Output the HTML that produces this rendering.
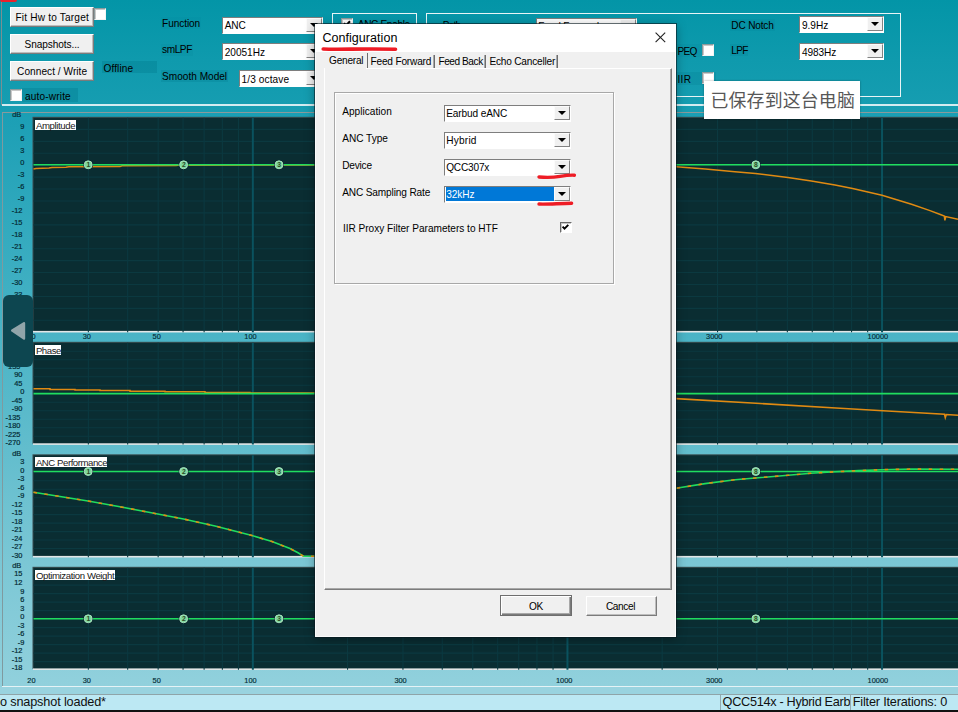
<!DOCTYPE html>
<html><head><meta charset="utf-8"><title>ANC Tuning - Configuration</title>
<style>
html,body{margin:0;padding:0;}
body{width:958px;height:712px;overflow:hidden;position:relative;background:#000;font-family:"Liberation Sans","Noto Sans CJK SC",sans-serif;}
.abs,.t,.btn,.cb,.chk,.lb{position:absolute;}
.t{white-space:nowrap;line-height:1;}
#bg{left:0;top:0;width:958px;height:695px;background:linear-gradient(to bottom,#0395a7 0px,#0f9aad 60px,#169db1 105px,#1c9fb5 118px,#33aabe 230px,#4ab4c6 337px,#62bdcd 450px,#7bc7d5 562px,#90d0dc 680px,#93d1dd 695px);}
.btn{background:#f0f0f0;box-sizing:border-box;border:1px solid;border-color:#fff #7b7b7b #7b7b7b #fff;box-shadow:inset -1px -1px 0 #bdbdbd;}
.cb{background:#fff;box-sizing:border-box;border:1px solid;border-color:#7e7e7e #fff #fff #7e7e7e;}
.cbb{position:absolute;right:0;top:0;bottom:1px;width:16px;background:#f0f0f0;box-sizing:border-box;border:1px solid;border-color:#fbfbfb #838383 #838383 #fbfbfb;}
.cbb:after{content:"";position:absolute;left:50%;top:50%;margin-left:-4px;margin-top:-2px;border:4px solid transparent;border-top-color:#000;border-bottom-width:0;}
.chk{background:#fff;box-sizing:border-box;border:1px solid;border-color:#8c9a9c #f4f4f4 #f4f4f4 #8c9a9c;box-shadow:inset 1px 1px 0 #c9c9c9;}
.lb{background:rgba(0,120,140,0.35);}
.grp{position:absolute;box-sizing:border-box;border:1px solid #e8f4f6;box-shadow:inset 0 0 0 0 #fff;}
.ttl{position:absolute;background:#fff;}
</style></head><body>
<div id="bg" class="abs"></div>

<div class="abs" style="left:1px;top:0;width:1px;height:105px;background:#7a8f93"></div>
<div class="abs" style="left:2px;top:104px;width:956px;height:2px;background:#d3ecf1"></div>
<div class="abs" style="left:0;top:0;width:17px;height:2px;background:#e8222c;border-radius:0 0 4px 4px"></div>
<div class="btn" style="left:10px;top:7px;width:84px;height:20px"></div>
<span class="t" id="t0" style="top:12.87px;font-size:10.1px;color:#000;letter-spacing:0.194px;left:15.40px;">Fit Hw to Target</span>
<div class="btn" style="left:10px;top:34px;width:84px;height:20px"></div>
<span class="t" id="t1" style="top:40.17px;font-size:10.1px;color:#000;letter-spacing:-0.094px;left:24.60px;">Snapshots...</span>
<div class="btn" style="left:10px;top:61px;width:84px;height:20px"></div>
<span class="t" id="t2" style="top:67.27px;font-size:10.1px;color:#000;letter-spacing:0.042px;left:17.10px;">Connect / Write</span>
<div class="chk" style="left:94px;top:8px;width:12px;height:12px"></div>
<div class="lb" style="left:102px;top:61px;width:55px;height:12px"></div>
<span class="t" id="t3" style="top:64.27px;font-size:10.1px;color:#000;letter-spacing:0.143px;left:103.40px;">Offline</span>
<div class="lb" style="left:22px;top:88px;width:56px;height:14px"></div>
<div class="chk" style="left:10px;top:89px;width:12px;height:12px"></div>
<span class="t" id="t4" style="top:91.57px;font-size:10.1px;color:#000;letter-spacing:0.167px;left:24.90px;">auto-write</span>
<div class="lb" style="left:161px;top:17px;width:40px;height:12px;opacity:.2"></div>
<span class="t" id="t5" style="top:18.67px;font-size:10.1px;color:#000;letter-spacing:-0.090px;left:162.10px;">Function</span>
<div class="lb" style="left:161px;top:44px;width:32px;height:12px;opacity:.3"></div>
<span class="t" id="t6" style="top:45.07px;font-size:10.1px;color:#000;letter-spacing:-0.434px;left:162.10px;">smLPF</span>
<div class="lb" style="left:161px;top:70px;width:67px;height:12px;opacity:.7"></div>
<span class="t" id="t7" style="top:72.07px;font-size:10.1px;color:#000;letter-spacing:-0.008px;left:162.10px;">Smooth Model</span>
<div class="cb" style="left:222px;top:17px;width:101px;height:17px"><div class="cbb"></div></div>
<span class="t" id="t8" style="top:21.17px;font-size:10.1px;color:#000;letter-spacing:-0.104px;left:224.70px;">ANC</span>
<div class="cb" style="left:222px;top:43px;width:101px;height:17px"><div class="cbb"></div></div>
<span class="t" id="t9" style="top:47.67px;font-size:10.1px;color:#000;letter-spacing:-0.015px;left:224.70px;">20051Hz</span>
<div class="cb" style="left:239px;top:70px;width:84px;height:17px"><div class="cbb"></div></div>
<span class="t" id="t10" style="top:74.77px;font-size:10.1px;color:#000;letter-spacing:0.092px;left:241.60px;">1/3 octave</span>
<div class="grp" style="left:332px;top:13px;width:85px;height:40px"></div>
<div class="chk" style="left:341px;top:18px;width:12px;height:12px"></div>
<svg class="abs" style="left:341px;top:18px" width="12" height="12" viewBox="0 0 12 12"><path d="M3 5.2 L5 7.4 L9 3.2" stroke="#000" stroke-width="2" fill="none"/></svg>
<span class="t" id="t11" style="top:20.17px;font-size:10.1px;color:#000;letter-spacing:-0.355px;left:357.80px;">ANC Enable</span>
<div class="grp" style="left:426px;top:13px;width:475px;height:84px"></div>
<span class="t" id="t12" style="top:20.97px;font-size:10.1px;color:#000;letter-spacing:-0.766px;left:442.70px;">Path</span>
<div class="cb" style="left:536px;top:18px;width:101px;height:17px"><div class="cbb"></div></div>
<span class="t" id="t13" style="top:22.17px;font-size:10.1px;color:#000;letter-spacing:-0.187px;left:538.30px;">Feed Forward</span>
<div class="lb" style="left:730px;top:19px;width:45px;height:12px;opacity:.4"></div>
<span class="t" id="t14" style="top:20.97px;font-size:10.1px;color:#000;letter-spacing:-0.183px;left:731.30px;">DC Notch</span>
<div class="cb" style="left:799px;top:16px;width:85px;height:17px"><div class="cbb"></div></div>
<span class="t" id="t15" style="top:20.97px;font-size:10.1px;color:#000;letter-spacing:-0.015px;left:801.90px;">9.9Hz</span>
<div class="lb" style="left:730px;top:44px;width:18px;height:12px;opacity:.5"></div>
<span class="t" id="t16" style="top:45.57px;font-size:10.1px;color:#000;letter-spacing:-0.672px;left:731.30px;">LPF</span>
<div class="cb" style="left:799px;top:43px;width:85px;height:17px"><div class="cbb"></div></div>
<span class="t" id="t17" style="top:47.77px;font-size:10.1px;color:#000;letter-spacing:-0.083px;left:801.90px;">4983Hz</span>
<div class="lb" style="left:676px;top:44px;width:26px;height:13px;opacity:.35"></div>
<span class="t" id="t18" style="top:46.57px;font-size:10.1px;color:#000;letter-spacing:-0.676px;left:677.40px;">PEQ</span>
<div class="chk" style="left:702px;top:44px;width:12px;height:12px"></div>
<div class="lb" style="left:676px;top:72px;width:40px;height:13px;opacity:.6"></div>
<span class="t" id="t19" style="top:75.37px;font-size:10.1px;color:#000;letter-spacing:0.365px;left:677.40px;">IIR</span>
<div class="chk" style="left:702px;top:72px;width:12px;height:12px"></div>
<div class="abs" style="left:2px;top:112px;width:956px;height:1px;background:#8a9a9c"></div>
<div class="abs" style="left:2px;top:112px;width:1px;height:575px;background:#7f9a9f"></div>
<div class="abs" style="left:2px;top:686px;width:956px;height:1px;background:#e4f3f6"></div>
<svg class="abs" style="left:0;top:0" width="958" height="712" viewBox="0 0 958 712">
<rect x="32.5" y="116.8" width="926" height="214.59999999999997" fill="#3a4f52"/>
<rect x="33.5" y="117.8" width="925" height="213.59999999999997" fill="#0a2d32"/>
<rect x="33" y="330.9" width="925" height="1.6" fill="#e2e6e7"/>
<path d="M33.5 129.41H958M33.5 141.34H958M33.5 153.27H958M33.5 165.20H958M33.5 177.13H958M33.5 189.06H958M33.5 200.99H958M33.5 212.92H958M33.5 224.85H958M33.5 236.78H958M33.5 248.71H958M33.5 260.64H958M33.5 272.57H958M33.5 284.50H958M33.5 296.43H958M33.5 308.36H958M33.5 320.29H958" stroke="#0b3940" stroke-width="1.1" fill="none"/>
<path d="M88.35 117.8V332.2M127.66 117.8V332.2M158.15 117.8V332.2M183.06 117.8V332.2M204.12 117.8V332.2M222.36 117.8V332.2M238.45 117.8V332.2M347.55 117.8V332.2M402.95 117.8V332.2M442.26 117.8V332.2M472.75 117.8V332.2M497.66 117.8V332.2M518.72 117.8V332.2M536.96 117.8V332.2M553.05 117.8V332.2M662.15 117.8V332.2M717.55 117.8V332.2M756.86 117.8V332.2M787.35 117.8V332.2M812.26 117.8V332.2M833.32 117.8V332.2M851.56 117.8V332.2M867.65 117.8V332.2" stroke="#0b3940" stroke-width="1.1" fill="none"/>
<path d="M252.85 117.8V332.2M567.45 117.8V332.2M882.05 117.8V332.2" stroke="#0a525e" stroke-width="2" fill="none"/>
<rect x="32.5" y="341.8" width="926" height="102.0" fill="#3a4f52"/>
<rect x="33.5" y="342.8" width="925" height="101.0" fill="#0a2d32"/>
<rect x="33" y="443.3" width="925" height="1.6" fill="#e2e6e7"/>
<path d="M33.5 351.20H958M33.5 359.70H958M33.5 368.20H958M33.5 376.70H958M33.5 385.20H958M33.5 393.70H958M33.5 402.20H958M33.5 410.70H958M33.5 419.20H958M33.5 427.70H958M33.5 436.20H958" stroke="#0b3940" stroke-width="1.1" fill="none"/>
<path d="M88.35 342.8V444.6M127.66 342.8V444.6M158.15 342.8V444.6M183.06 342.8V444.6M204.12 342.8V444.6M222.36 342.8V444.6M238.45 342.8V444.6M347.55 342.8V444.6M402.95 342.8V444.6M442.26 342.8V444.6M472.75 342.8V444.6M497.66 342.8V444.6M518.72 342.8V444.6M536.96 342.8V444.6M553.05 342.8V444.6M662.15 342.8V444.6M717.55 342.8V444.6M756.86 342.8V444.6M787.35 342.8V444.6M812.26 342.8V444.6M833.32 342.8V444.6M851.56 342.8V444.6M867.65 342.8V444.6" stroke="#0b3940" stroke-width="1.1" fill="none"/>
<path d="M252.85 342.8V444.6M567.45 342.8V444.6M882.05 342.8V444.6" stroke="#0a525e" stroke-width="2" fill="none"/>
<rect x="32.5" y="454.3" width="926" height="102.09999999999997" fill="#3a4f52"/>
<rect x="33.5" y="455.3" width="925" height="101.09999999999997" fill="#0a2d32"/>
<rect x="33" y="555.9" width="925" height="1.6" fill="#e2e6e7"/>
<path d="M33.5 463.83H958M33.5 472.30H958M33.5 480.77H958M33.5 489.24H958M33.5 497.71H958M33.5 506.18H958M33.5 514.65H958M33.5 523.12H958M33.5 531.59H958M33.5 540.06H958M33.5 548.53H958" stroke="#0b3940" stroke-width="1.1" fill="none"/>
<path d="M88.35 455.3V557.1999999999999M127.66 455.3V557.1999999999999M158.15 455.3V557.1999999999999M183.06 455.3V557.1999999999999M204.12 455.3V557.1999999999999M222.36 455.3V557.1999999999999M238.45 455.3V557.1999999999999M347.55 455.3V557.1999999999999M402.95 455.3V557.1999999999999M442.26 455.3V557.1999999999999M472.75 455.3V557.1999999999999M497.66 455.3V557.1999999999999M518.72 455.3V557.1999999999999M536.96 455.3V557.1999999999999M553.05 455.3V557.1999999999999M662.15 455.3V557.1999999999999M717.55 455.3V557.1999999999999M756.86 455.3V557.1999999999999M787.35 455.3V557.1999999999999M812.26 455.3V557.1999999999999M833.32 455.3V557.1999999999999M851.56 455.3V557.1999999999999M867.65 455.3V557.1999999999999" stroke="#0b3940" stroke-width="1.1" fill="none"/>
<path d="M252.85 455.3V557.1999999999999M567.45 455.3V557.1999999999999M882.05 455.3V557.1999999999999" stroke="#0a525e" stroke-width="2" fill="none"/>
<rect x="32.5" y="566.8" width="926" height="102.10000000000002" fill="#3a4f52"/>
<rect x="33.5" y="567.8" width="925" height="101.10000000000002" fill="#0a2d32"/>
<rect x="33" y="668.4" width="925" height="1.6" fill="#e2e6e7"/>
<path d="M33.5 576.60H958M33.5 585.10H958M33.5 593.60H958M33.5 602.10H958M33.5 610.60H958M33.5 619.10H958M33.5 627.60H958M33.5 636.10H958M33.5 644.60H958M33.5 653.10H958M33.5 661.60H958" stroke="#0b3940" stroke-width="1.1" fill="none"/>
<path d="M88.35 567.8V669.6999999999999M127.66 567.8V669.6999999999999M158.15 567.8V669.6999999999999M183.06 567.8V669.6999999999999M204.12 567.8V669.6999999999999M222.36 567.8V669.6999999999999M238.45 567.8V669.6999999999999M347.55 567.8V669.6999999999999M402.95 567.8V669.6999999999999M442.26 567.8V669.6999999999999M472.75 567.8V669.6999999999999M497.66 567.8V669.6999999999999M518.72 567.8V669.6999999999999M536.96 567.8V669.6999999999999M553.05 567.8V669.6999999999999M662.15 567.8V669.6999999999999M717.55 567.8V669.6999999999999M756.86 567.8V669.6999999999999M787.35 567.8V669.6999999999999M812.26 567.8V669.6999999999999M833.32 567.8V669.6999999999999M851.56 567.8V669.6999999999999M867.65 567.8V669.6999999999999" stroke="#0b3940" stroke-width="1.1" fill="none"/>
<path d="M252.85 567.8V669.6999999999999M567.45 567.8V669.6999999999999M882.05 567.8V669.6999999999999" stroke="#0a525e" stroke-width="2" fill="none"/>
<path d="M33.5 168.9 L36.0 168.4 L49.0 168.0 L52.0 167.6 L66.0 167.2 L69.0 166.7 L120.0 166.6 L122.0 165.8 L176.0 165.6 L178.0 165.2 L320.0 165.0" stroke="#e08a12" stroke-width="1.5" fill="none"/>
<path d="M560.0 165.2 L620.0 165.8 L676.0 166.8 L705.4 169.1 L734.9 171.8 L755.5 173.5 L787.9 177.4 L811.4 180.9 L835.0 185.0 L852.6 188.6 L882.0 195.3 L911.5 204.2 L930.0 210.6 L941.0 214.8 L944.3 216.0 L944.9 220.4 L945.8 216.6 L958.0 219.3" stroke="#e08a12" stroke-width="1.5" fill="none"/>
<path d="M33.5 164.8H958" stroke="#20dd5e" stroke-width="1.6" fill="none"/>
<path d="M33.5 388.8 L50.0 388.8 L50.0 389.4 L75.0 389.4 L75.0 390.0 L100.0 390.0 L100.0 390.6 L130.0 390.6 L130.0 391.2 L165.0 391.2 L165.0 391.8 L205.0 391.8 L205.0 392.4 L250.0 392.4 L250.0 393.0 L320.0 393.0" stroke="#e08a12" stroke-width="1.5" fill="none"/>
<path d="M560.0 394.5 L620.0 396.5 L676.0 398.6 L756.0 403.3 L840.0 408.2 L883.0 410.7 L944.5 414.3 L945.3 417.6 L946.3 414.5 L958.0 415.2" stroke="#e08a12" stroke-width="1.6" fill="none"/>
<path d="M33.5 393.6H958" stroke="#20dd5e" stroke-width="1.6" fill="none"/>
<path d="M33.5 471.5H958" stroke="#20dd5e" stroke-width="1.6" fill="none"/>
<path d="M33.5 492.3 L60.0 496.5 L88.0 501.0 L120.0 506.8 L150.0 512.5 L183.5 519.0 L215.0 526.0 L252.0 535.5 L272.0 541.6 L290.0 548.5 L298.0 552.8 L303.5 556.2 L320.0 556.2" stroke="#20dd5e" stroke-width="1.6" fill="none"/>
<path d="M33.5 492.3 L60.0 496.5 L88.0 501.0 L120.0 506.8 L150.0 512.5 L183.5 519.0 L215.0 526.0 L252.0 535.5 L272.0 541.6 L290.0 548.5 L298.0 552.8 L303.5 556.2 L320.0 556.2" stroke="#e08a12" stroke-width="1.6" stroke-dasharray="3.5 7.5" fill="none"/>
<path d="M560.0 520.0 L620.0 502.0 L676.0 488.3 L705.0 483.6 L735.0 479.7 L755.5 478.0 L788.0 475.3 L811.0 473.3 L835.0 471.8 L858.5 470.6 L882.0 469.7 L911.5 469.1 L958.0 469.3" stroke="#20dd5e" stroke-width="1.6" fill="none"/>
<path d="M560.0 520.0 L620.0 502.0 L676.0 488.3 L705.0 483.6 L735.0 479.7 L755.5 478.0 L788.0 475.3 L811.0 473.3 L835.0 471.8 L858.5 470.6 L882.0 469.7 L911.5 469.1 L958.0 469.3" stroke="#e08a12" stroke-width="1.6" stroke-dasharray="3.5 7.5" fill="none"/>
<path d="M33.5 618.8H958" stroke="#20dd5e" stroke-width="1.6" fill="none"/>
<circle cx="88.2" cy="164.8" r="4.9" fill="#06202a"/>
<circle cx="88.2" cy="164.8" r="4.0" fill="#7fd79e" stroke="#abe7c2" stroke-width="0.9"/>
<text x="88.4" y="167.20000000000002" font-size="6.8" font-weight="bold" text-anchor="middle" fill="#2c4a24" font-family="Liberation Sans, sans-serif">1</text>
<circle cx="183.6" cy="164.8" r="4.9" fill="#06202a"/>
<circle cx="183.6" cy="164.8" r="4.0" fill="#7fd79e" stroke="#abe7c2" stroke-width="0.9"/>
<text x="183.79999999999998" y="167.20000000000002" font-size="6.8" font-weight="bold" text-anchor="middle" fill="#2c4a24" font-family="Liberation Sans, sans-serif">2</text>
<circle cx="279" cy="164.8" r="4.9" fill="#06202a"/>
<circle cx="279" cy="164.8" r="4.0" fill="#7fd79e" stroke="#abe7c2" stroke-width="0.9"/>
<text x="279.2" y="167.20000000000002" font-size="6.8" font-weight="bold" text-anchor="middle" fill="#2c4a24" font-family="Liberation Sans, sans-serif">3</text>
<circle cx="374" cy="164.8" r="4.9" fill="#06202a"/>
<circle cx="374" cy="164.8" r="4.0" fill="#7fd79e" stroke="#abe7c2" stroke-width="0.9"/>
<text x="374.2" y="167.20000000000002" font-size="6.8" font-weight="bold" text-anchor="middle" fill="#2c4a24" font-family="Liberation Sans, sans-serif">4</text>
<circle cx="470" cy="164.8" r="4.9" fill="#06202a"/>
<circle cx="470" cy="164.8" r="4.0" fill="#7fd79e" stroke="#abe7c2" stroke-width="0.9"/>
<text x="470.2" y="167.20000000000002" font-size="6.8" font-weight="bold" text-anchor="middle" fill="#2c4a24" font-family="Liberation Sans, sans-serif">5</text>
<circle cx="565" cy="164.8" r="4.9" fill="#06202a"/>
<circle cx="565" cy="164.8" r="4.0" fill="#7fd79e" stroke="#abe7c2" stroke-width="0.9"/>
<text x="565.2" y="167.20000000000002" font-size="6.8" font-weight="bold" text-anchor="middle" fill="#2c4a24" font-family="Liberation Sans, sans-serif">6</text>
<circle cx="660" cy="164.8" r="4.9" fill="#06202a"/>
<circle cx="660" cy="164.8" r="4.0" fill="#7fd79e" stroke="#abe7c2" stroke-width="0.9"/>
<text x="660.2" y="167.20000000000002" font-size="6.8" font-weight="bold" text-anchor="middle" fill="#2c4a24" font-family="Liberation Sans, sans-serif">7</text>
<circle cx="755.8" cy="164.8" r="4.9" fill="#06202a"/>
<circle cx="755.8" cy="164.8" r="4.0" fill="#7fd79e" stroke="#abe7c2" stroke-width="0.9"/>
<text x="756.0" y="167.20000000000002" font-size="6.8" font-weight="bold" text-anchor="middle" fill="#2c4a24" font-family="Liberation Sans, sans-serif">8</text>
<circle cx="88.2" cy="471.5" r="4.9" fill="#06202a"/>
<circle cx="88.2" cy="471.5" r="4.0" fill="#7fd79e" stroke="#abe7c2" stroke-width="0.9"/>
<text x="88.4" y="473.9" font-size="6.8" font-weight="bold" text-anchor="middle" fill="#2c4a24" font-family="Liberation Sans, sans-serif">1</text>
<circle cx="183.6" cy="471.5" r="4.9" fill="#06202a"/>
<circle cx="183.6" cy="471.5" r="4.0" fill="#7fd79e" stroke="#abe7c2" stroke-width="0.9"/>
<text x="183.79999999999998" y="473.9" font-size="6.8" font-weight="bold" text-anchor="middle" fill="#2c4a24" font-family="Liberation Sans, sans-serif">2</text>
<circle cx="279" cy="471.5" r="4.9" fill="#06202a"/>
<circle cx="279" cy="471.5" r="4.0" fill="#7fd79e" stroke="#abe7c2" stroke-width="0.9"/>
<text x="279.2" y="473.9" font-size="6.8" font-weight="bold" text-anchor="middle" fill="#2c4a24" font-family="Liberation Sans, sans-serif">3</text>
<circle cx="374" cy="471.5" r="4.9" fill="#06202a"/>
<circle cx="374" cy="471.5" r="4.0" fill="#7fd79e" stroke="#abe7c2" stroke-width="0.9"/>
<text x="374.2" y="473.9" font-size="6.8" font-weight="bold" text-anchor="middle" fill="#2c4a24" font-family="Liberation Sans, sans-serif">4</text>
<circle cx="470" cy="471.5" r="4.9" fill="#06202a"/>
<circle cx="470" cy="471.5" r="4.0" fill="#7fd79e" stroke="#abe7c2" stroke-width="0.9"/>
<text x="470.2" y="473.9" font-size="6.8" font-weight="bold" text-anchor="middle" fill="#2c4a24" font-family="Liberation Sans, sans-serif">5</text>
<circle cx="565" cy="471.5" r="4.9" fill="#06202a"/>
<circle cx="565" cy="471.5" r="4.0" fill="#7fd79e" stroke="#abe7c2" stroke-width="0.9"/>
<text x="565.2" y="473.9" font-size="6.8" font-weight="bold" text-anchor="middle" fill="#2c4a24" font-family="Liberation Sans, sans-serif">6</text>
<circle cx="660" cy="471.5" r="4.9" fill="#06202a"/>
<circle cx="660" cy="471.5" r="4.0" fill="#7fd79e" stroke="#abe7c2" stroke-width="0.9"/>
<text x="660.2" y="473.9" font-size="6.8" font-weight="bold" text-anchor="middle" fill="#2c4a24" font-family="Liberation Sans, sans-serif">7</text>
<circle cx="755.8" cy="471.5" r="4.9" fill="#06202a"/>
<circle cx="755.8" cy="471.5" r="4.0" fill="#7fd79e" stroke="#abe7c2" stroke-width="0.9"/>
<text x="756.0" y="473.9" font-size="6.8" font-weight="bold" text-anchor="middle" fill="#2c4a24" font-family="Liberation Sans, sans-serif">8</text>
<circle cx="88.2" cy="618.8" r="4.9" fill="#06202a"/>
<circle cx="88.2" cy="618.8" r="4.0" fill="#7fd79e" stroke="#abe7c2" stroke-width="0.9"/>
<text x="88.4" y="621.1999999999999" font-size="6.8" font-weight="bold" text-anchor="middle" fill="#2c4a24" font-family="Liberation Sans, sans-serif">1</text>
<circle cx="183.6" cy="618.8" r="4.9" fill="#06202a"/>
<circle cx="183.6" cy="618.8" r="4.0" fill="#7fd79e" stroke="#abe7c2" stroke-width="0.9"/>
<text x="183.79999999999998" y="621.1999999999999" font-size="6.8" font-weight="bold" text-anchor="middle" fill="#2c4a24" font-family="Liberation Sans, sans-serif">2</text>
<circle cx="279" cy="618.8" r="4.9" fill="#06202a"/>
<circle cx="279" cy="618.8" r="4.0" fill="#7fd79e" stroke="#abe7c2" stroke-width="0.9"/>
<text x="279.2" y="621.1999999999999" font-size="6.8" font-weight="bold" text-anchor="middle" fill="#2c4a24" font-family="Liberation Sans, sans-serif">3</text>
<circle cx="374" cy="618.8" r="4.9" fill="#06202a"/>
<circle cx="374" cy="618.8" r="4.0" fill="#7fd79e" stroke="#abe7c2" stroke-width="0.9"/>
<text x="374.2" y="621.1999999999999" font-size="6.8" font-weight="bold" text-anchor="middle" fill="#2c4a24" font-family="Liberation Sans, sans-serif">4</text>
<circle cx="470" cy="618.8" r="4.9" fill="#06202a"/>
<circle cx="470" cy="618.8" r="4.0" fill="#7fd79e" stroke="#abe7c2" stroke-width="0.9"/>
<text x="470.2" y="621.1999999999999" font-size="6.8" font-weight="bold" text-anchor="middle" fill="#2c4a24" font-family="Liberation Sans, sans-serif">5</text>
<circle cx="565" cy="618.8" r="4.9" fill="#06202a"/>
<circle cx="565" cy="618.8" r="4.0" fill="#7fd79e" stroke="#abe7c2" stroke-width="0.9"/>
<text x="565.2" y="621.1999999999999" font-size="6.8" font-weight="bold" text-anchor="middle" fill="#2c4a24" font-family="Liberation Sans, sans-serif">6</text>
<circle cx="660" cy="618.8" r="4.9" fill="#06202a"/>
<circle cx="660" cy="618.8" r="4.0" fill="#7fd79e" stroke="#abe7c2" stroke-width="0.9"/>
<text x="660.2" y="621.1999999999999" font-size="6.8" font-weight="bold" text-anchor="middle" fill="#2c4a24" font-family="Liberation Sans, sans-serif">7</text>
<circle cx="755.8" cy="618.8" r="4.9" fill="#06202a"/>
<circle cx="755.8" cy="618.8" r="4.0" fill="#7fd79e" stroke="#abe7c2" stroke-width="0.9"/>
<text x="756.0" y="621.1999999999999" font-size="6.8" font-weight="bold" text-anchor="middle" fill="#2c4a24" font-family="Liberation Sans, sans-serif">8</text>
</svg>
<span class="t" id="t20" style="top:111.41px;font-size:7.4px;color:#042a33;right:936.80px;-webkit-text-stroke:0.2px #042a33;">dB</span>
<span class="t" id="t21" style="top:123.38px;font-size:7.4px;color:#042a33;right:933.60px;-webkit-text-stroke:0.2px #042a33;">9</span>
<span class="t" id="t22" style="top:135.35px;font-size:7.4px;color:#042a33;right:933.60px;-webkit-text-stroke:0.2px #042a33;">6</span>
<span class="t" id="t23" style="top:147.32px;font-size:7.4px;color:#042a33;right:933.60px;-webkit-text-stroke:0.2px #042a33;">3</span>
<span class="t" id="t24" style="top:159.29px;font-size:7.4px;color:#042a33;right:933.60px;-webkit-text-stroke:0.2px #042a33;">0</span>
<span class="t" id="t25" style="top:171.26px;font-size:7.4px;color:#042a33;right:933.60px;-webkit-text-stroke:0.2px #042a33;">-3</span>
<span class="t" id="t26" style="top:183.23px;font-size:7.4px;color:#042a33;right:933.60px;-webkit-text-stroke:0.2px #042a33;">-6</span>
<span class="t" id="t27" style="top:195.20px;font-size:7.4px;color:#042a33;right:933.60px;-webkit-text-stroke:0.2px #042a33;">-9</span>
<span class="t" id="t28" style="top:207.17px;font-size:7.4px;color:#042a33;right:935.60px;-webkit-text-stroke:0.2px #042a33;">-12</span>
<span class="t" id="t29" style="top:219.14px;font-size:7.4px;color:#042a33;right:935.60px;-webkit-text-stroke:0.2px #042a33;">-15</span>
<span class="t" id="t30" style="top:231.11px;font-size:7.4px;color:#042a33;right:935.60px;-webkit-text-stroke:0.2px #042a33;">-18</span>
<span class="t" id="t31" style="top:243.08px;font-size:7.4px;color:#042a33;right:935.60px;-webkit-text-stroke:0.2px #042a33;">-21</span>
<span class="t" id="t32" style="top:255.05px;font-size:7.4px;color:#042a33;right:935.60px;-webkit-text-stroke:0.2px #042a33;">-24</span>
<span class="t" id="t33" style="top:267.02px;font-size:7.4px;color:#042a33;right:935.60px;-webkit-text-stroke:0.2px #042a33;">-27</span>
<span class="t" id="t34" style="top:278.99px;font-size:7.4px;color:#042a33;right:935.60px;-webkit-text-stroke:0.2px #042a33;">-30</span>
<span class="t" id="t35" style="top:290.96px;font-size:7.4px;color:#042a33;right:935.60px;-webkit-text-stroke:0.2px #042a33;">-33</span>
<div class="ttl" style="left:34.5px;top:119.5px;width:41px;height:10px"></div>
<span class="t" id="t36" style="top:120.51px;font-size:9.6px;color:#201818;letter-spacing:-0.364px;left:35.90px;">Amplitude</span>
<span class="t" id="t37" style="top:345.79px;font-size:7.4px;color:#042a33;right:936.80px;-webkit-text-stroke:0.2px #042a33;">225</span>
<span class="t" id="t38" style="top:354.29px;font-size:7.4px;color:#042a33;right:937.60px;-webkit-text-stroke:0.2px #042a33;">180</span>
<span class="t" id="t39" style="top:362.79px;font-size:7.4px;color:#042a33;right:937.60px;-webkit-text-stroke:0.2px #042a33;">135</span>
<span class="t" id="t40" style="top:371.29px;font-size:7.4px;color:#042a33;right:935.60px;-webkit-text-stroke:0.2px #042a33;">90</span>
<span class="t" id="t41" style="top:379.79px;font-size:7.4px;color:#042a33;right:935.60px;-webkit-text-stroke:0.2px #042a33;">45</span>
<span class="t" id="t42" style="top:388.29px;font-size:7.4px;color:#042a33;right:933.60px;-webkit-text-stroke:0.2px #042a33;">0</span>
<span class="t" id="t43" style="top:396.79px;font-size:7.4px;color:#042a33;right:935.60px;-webkit-text-stroke:0.2px #042a33;">-45</span>
<span class="t" id="t44" style="top:405.29px;font-size:7.4px;color:#042a33;right:935.60px;-webkit-text-stroke:0.2px #042a33;">-90</span>
<span class="t" id="t45" style="top:413.79px;font-size:7.4px;color:#042a33;right:937.60px;-webkit-text-stroke:0.2px #042a33;">-135</span>
<span class="t" id="t46" style="top:422.29px;font-size:7.4px;color:#042a33;right:937.60px;-webkit-text-stroke:0.2px #042a33;">-180</span>
<span class="t" id="t47" style="top:430.79px;font-size:7.4px;color:#042a33;right:937.60px;-webkit-text-stroke:0.2px #042a33;">-225</span>
<span class="t" id="t48" style="top:439.29px;font-size:7.4px;color:#042a33;right:937.60px;-webkit-text-stroke:0.2px #042a33;">-270</span>
<div class="ttl" style="left:34.5px;top:344.5px;width:26.6px;height:10px"></div>
<span class="t" id="t49" style="top:345.51px;font-size:9.6px;color:#201818;letter-spacing:-0.441px;left:35.90px;">Phase</span>
<span class="t" id="t50" style="top:449.57px;font-size:7.4px;color:#042a33;right:936.80px;-webkit-text-stroke:0.2px #042a33;">dB</span>
<span class="t" id="t51" style="top:458.08px;font-size:7.4px;color:#042a33;right:933.60px;-webkit-text-stroke:0.2px #042a33;">3</span>
<span class="t" id="t52" style="top:466.59px;font-size:7.4px;color:#042a33;right:933.60px;-webkit-text-stroke:0.2px #042a33;">0</span>
<span class="t" id="t53" style="top:475.10px;font-size:7.4px;color:#042a33;right:933.60px;-webkit-text-stroke:0.2px #042a33;">-3</span>
<span class="t" id="t54" style="top:483.61px;font-size:7.4px;color:#042a33;right:933.60px;-webkit-text-stroke:0.2px #042a33;">-6</span>
<span class="t" id="t55" style="top:492.12px;font-size:7.4px;color:#042a33;right:933.60px;-webkit-text-stroke:0.2px #042a33;">-9</span>
<span class="t" id="t56" style="top:500.63px;font-size:7.4px;color:#042a33;right:935.60px;-webkit-text-stroke:0.2px #042a33;">-12</span>
<span class="t" id="t57" style="top:509.14px;font-size:7.4px;color:#042a33;right:935.60px;-webkit-text-stroke:0.2px #042a33;">-15</span>
<span class="t" id="t58" style="top:517.65px;font-size:7.4px;color:#042a33;right:935.60px;-webkit-text-stroke:0.2px #042a33;">-18</span>
<span class="t" id="t59" style="top:526.16px;font-size:7.4px;color:#042a33;right:935.60px;-webkit-text-stroke:0.2px #042a33;">-21</span>
<span class="t" id="t60" style="top:534.67px;font-size:7.4px;color:#042a33;right:935.60px;-webkit-text-stroke:0.2px #042a33;">-24</span>
<span class="t" id="t61" style="top:543.18px;font-size:7.4px;color:#042a33;right:935.60px;-webkit-text-stroke:0.2px #042a33;">-27</span>
<span class="t" id="t62" style="top:551.69px;font-size:7.4px;color:#042a33;right:935.60px;-webkit-text-stroke:0.2px #042a33;">-30</span>
<div class="ttl" style="left:34.5px;top:457.0px;width:72.8px;height:10px"></div>
<span class="t" id="t63" style="top:458.01px;font-size:9.6px;color:#201818;letter-spacing:-0.443px;left:35.90px;">ANC Performance</span>
<span class="t" id="t64" style="top:561.89px;font-size:7.4px;color:#042a33;right:936.80px;-webkit-text-stroke:0.2px #042a33;">dB</span>
<span class="t" id="t65" style="top:570.44px;font-size:7.4px;color:#042a33;right:935.60px;-webkit-text-stroke:0.2px #042a33;">15</span>
<span class="t" id="t66" style="top:578.99px;font-size:7.4px;color:#042a33;right:935.60px;-webkit-text-stroke:0.2px #042a33;">12</span>
<span class="t" id="t67" style="top:587.54px;font-size:7.4px;color:#042a33;right:933.60px;-webkit-text-stroke:0.2px #042a33;">9</span>
<span class="t" id="t68" style="top:596.09px;font-size:7.4px;color:#042a33;right:933.60px;-webkit-text-stroke:0.2px #042a33;">6</span>
<span class="t" id="t69" style="top:604.64px;font-size:7.4px;color:#042a33;right:933.60px;-webkit-text-stroke:0.2px #042a33;">3</span>
<span class="t" id="t70" style="top:613.19px;font-size:7.4px;color:#042a33;right:933.60px;-webkit-text-stroke:0.2px #042a33;">0</span>
<span class="t" id="t71" style="top:621.74px;font-size:7.4px;color:#042a33;right:933.60px;-webkit-text-stroke:0.2px #042a33;">-3</span>
<span class="t" id="t72" style="top:630.29px;font-size:7.4px;color:#042a33;right:933.60px;-webkit-text-stroke:0.2px #042a33;">-6</span>
<span class="t" id="t73" style="top:638.84px;font-size:7.4px;color:#042a33;right:933.60px;-webkit-text-stroke:0.2px #042a33;">-9</span>
<span class="t" id="t74" style="top:647.39px;font-size:7.4px;color:#042a33;right:935.60px;-webkit-text-stroke:0.2px #042a33;">-12</span>
<span class="t" id="t75" style="top:655.94px;font-size:7.4px;color:#042a33;right:935.60px;-webkit-text-stroke:0.2px #042a33;">-15</span>
<span class="t" id="t76" style="top:664.49px;font-size:7.4px;color:#042a33;right:935.60px;-webkit-text-stroke:0.2px #042a33;">-18</span>
<div class="ttl" style="left:34.5px;top:569.5px;width:80px;height:10px"></div>
<span class="t" id="t77" style="top:570.51px;font-size:9.6px;color:#201818;letter-spacing:-0.383px;left:35.90px;">Optimization Weight</span>
<span class="t" id="t78" style="top:332.89px;font-size:7.4px;color:#042a33;left:-68.55px;width:200px;text-align:center;-webkit-text-stroke:0.15px #042a33;">20</span>
<span class="t" id="t79" style="top:332.89px;font-size:7.4px;color:#042a33;left:-13.15px;width:200px;text-align:center;-webkit-text-stroke:0.15px #042a33;">30</span>
<span class="t" id="t80" style="top:332.89px;font-size:7.4px;color:#042a33;left:56.65px;width:200px;text-align:center;-webkit-text-stroke:0.15px #042a33;">50</span>
<span class="t" id="t81" style="top:332.89px;font-size:7.4px;color:#042a33;left:150.45px;width:200px;text-align:center;-webkit-text-stroke:0.15px #042a33;">100</span>
<span class="t" id="t82" style="top:332.89px;font-size:7.4px;color:#042a33;left:300.55px;width:200px;text-align:center;-webkit-text-stroke:0.15px #042a33;">300</span>
<span class="t" id="t83" style="top:332.89px;font-size:7.4px;color:#042a33;left:464.15px;width:200px;text-align:center;-webkit-text-stroke:0.15px #042a33;">1000</span>
<span class="t" id="t84" style="top:332.89px;font-size:7.4px;color:#042a33;left:614.25px;width:200px;text-align:center;-webkit-text-stroke:0.15px #042a33;">3000</span>
<span class="t" id="t85" style="top:332.89px;font-size:7.4px;color:#042a33;left:777.85px;width:200px;text-align:center;-webkit-text-stroke:0.15px #042a33;">10000</span>
<span class="t" id="t86" style="top:676.79px;font-size:7.4px;color:#042a33;left:-68.55px;width:200px;text-align:center;-webkit-text-stroke:0.15px #042a33;">20</span>
<span class="t" id="t87" style="top:676.79px;font-size:7.4px;color:#042a33;left:-13.15px;width:200px;text-align:center;-webkit-text-stroke:0.15px #042a33;">30</span>
<span class="t" id="t88" style="top:676.79px;font-size:7.4px;color:#042a33;left:56.65px;width:200px;text-align:center;-webkit-text-stroke:0.15px #042a33;">50</span>
<span class="t" id="t89" style="top:676.79px;font-size:7.4px;color:#042a33;left:150.45px;width:200px;text-align:center;-webkit-text-stroke:0.15px #042a33;">100</span>
<span class="t" id="t90" style="top:676.79px;font-size:7.4px;color:#042a33;left:300.55px;width:200px;text-align:center;-webkit-text-stroke:0.15px #042a33;">300</span>
<span class="t" id="t91" style="top:676.79px;font-size:7.4px;color:#042a33;left:464.15px;width:200px;text-align:center;-webkit-text-stroke:0.15px #042a33;">1000</span>
<span class="t" id="t92" style="top:676.79px;font-size:7.4px;color:#042a33;left:614.25px;width:200px;text-align:center;-webkit-text-stroke:0.15px #042a33;">3000</span>
<span class="t" id="t93" style="top:676.79px;font-size:7.4px;color:#042a33;left:777.85px;width:200px;text-align:center;-webkit-text-stroke:0.15px #042a33;">10000</span>
<div class="abs" style="left:3px;top:295px;width:30px;height:71.5px;border-radius:6px;background:#0d4650"></div>
<svg class="abs" style="left:9px;top:319px" width="20" height="24" viewBox="0 0 20 24"><path d="M15 4.2 L3.2 11.5 L15 19.6 Z" fill="#91a5aa" stroke="#91a5aa" stroke-width="2.4" stroke-linejoin="round"/></svg>
<div class="abs" style="left:704px;top:81px;width:156px;height:37.6px;background:#fff;box-shadow:0 0 2px rgba(0,0,0,.35)"></div>
<span class="t" id="t94" style="top:93.36px;font-size:17.9px;color:#575757;letter-spacing:0.170px;left:710.50px;font-family:'Liberation Sans','Noto Sans CJK SC',sans-serif;">已保存到这台电脑</span>
<div class="abs" style="left:0;top:687px;width:958px;height:8px;background:#99d3df"></div>
<div class="abs" style="left:0;top:694px;width:958px;height:1px;background:#8fa4a8"></div>
<div class="abs" style="left:0;top:695px;width:958px;height:17px;background:#bce8f3"></div>
<div class="abs" style="left:0;top:710.4px;width:958px;height:3px;background:#111"></div>
<div class="abs" style="left:720px;top:695px;width:1px;height:15px;background:#93aab0"></div>
<div class="abs" style="left:850px;top:695px;width:1px;height:15px;background:#93aab0"></div>
<span class="t" id="t95" style="top:696.10px;font-size:12.7px;color:#101010;letter-spacing:-0.147px;left:-0.10px;">o snapshot loaded*</span>
<div class="abs" style="left:721px;top:695px;width:129px;height:15.4px;overflow:hidden">
<span class="t" id="t96" style="top:1.10px;font-size:12.7px;color:#101010;letter-spacing:-0.303px;left:1.60px;">QCC514x - Hybrid Earb<span>ud</span></span>
</div>
<span class="t" id="t97" style="top:696.10px;font-size:12.7px;color:#101010;letter-spacing:-0.181px;left:852.70px;">Filter Iterations: 0</span>
<div class="abs" style="left:315px;top:24px;width:361px;height:613px;background:#f0f0f0;box-shadow:inset 0 0 0 1px #fbfbfb,0 0 0 1px rgba(8,25,32,.6),0 2px 10px rgba(0,0,0,.35)"></div>
<div class="abs" style="left:315px;top:24px;width:361px;height:28px;background:#fff"></div>
<span class="t" id="t98" style="top:32.29px;font-size:12.5px;color:#000;letter-spacing:0.049px;left:322.40px;">Configuration</span>
<svg class="abs" style="left:318px;top:44px" width="84" height="10" viewBox="0 0 84 10"><path d="M5.2 5 C 20 5.6, 45 4.6, 77.5 5.2" stroke="#ee1c25" stroke-width="3.6" stroke-linecap="round" fill="none"/></svg>
<svg class="abs" style="left:654px;top:31px" width="13" height="13" viewBox="0 0 13 13"><path d="M1.6 1.6 L11.2 11.2 M11.2 1.6 L1.6 11.2" stroke="#222" stroke-width="1.1" fill="none"/></svg>
<span class="t" id="t99" style="top:55.97px;font-size:10.1px;color:#000;letter-spacing:-0.217px;left:329.00px;">General</span>
<span class="t" id="t100" style="top:57.27px;font-size:10.1px;color:#000;letter-spacing:-0.179px;left:370.50px;">Feed Forward</span>
<span class="t" id="t101" style="top:57.27px;font-size:10.1px;color:#000;letter-spacing:-0.430px;left:438.40px;">Feed Back</span>
<span class="t" id="t102" style="top:57.27px;font-size:10.1px;color:#000;letter-spacing:-0.190px;left:489.40px;">Echo Canceller</span>
<div class="abs" style="left:366.6px;top:53px;width:1px;height:16px;background:#6d6d6d"></div>
<div class="abs" style="left:433.5px;top:55px;width:1px;height:13px;background:#6d6d6d"></div>
<div class="abs" style="left:432.5px;top:55px;width:1px;height:13px;background:#a8a8a8"></div>
<div class="abs" style="left:485px;top:55px;width:1px;height:13px;background:#6d6d6d"></div>
<div class="abs" style="left:484px;top:55px;width:1px;height:13px;background:#a8a8a8"></div>
<div class="abs" style="left:557px;top:55px;width:1px;height:13px;background:#6d6d6d"></div>
<div class="abs" style="left:556px;top:55px;width:1px;height:13px;background:#a8a8a8"></div>
<div class="abs" style="left:324px;top:68px;width:348px;height:522px;box-sizing:border-box;border:1px solid;border-color:#fff #7c7c7c #7c7c7c #fff;box-shadow:inset -1px -1px 0 #a8a8a8"></div>
<div class="abs" style="left:325px;top:66px;width:41px;height:4px;background:#f0f0f0"></div>
<div class="abs" style="left:334px;top:92px;width:280px;height:192px;box-sizing:border-box;border:1px solid #a8a8a8;box-shadow:inset 1px 1px 0 #fff, 1px 1px 0 #fff"></div>
<span class="t" id="t103" style="top:106.67px;font-size:10.1px;color:#000;letter-spacing:0.028px;left:342.20px;">Application</span>
<div class="cb" style="left:444.2px;top:104.9px;width:127px;height:17px"><div class="cbb"></div></div>
<span class="t" id="t104" style="top:109.37px;font-size:10.1px;color:#000;letter-spacing:-0.116px;left:446.20px;">Earbud eANC</span>
<span class="t" id="t105" style="top:133.67px;font-size:10.1px;color:#000;letter-spacing:-0.004px;left:342.20px;">ANC Type</span>
<div class="cb" style="left:444.2px;top:131.9px;width:127px;height:17px"><div class="cbb"></div></div>
<span class="t" id="t106" style="top:136.37px;font-size:10.1px;color:#000;letter-spacing:0.221px;left:446.20px;">Hybrid</span>
<span class="t" id="t107" style="top:160.67px;font-size:10.1px;color:#000;letter-spacing:-0.210px;left:342.20px;">Device</span>
<div class="cb" style="left:444.2px;top:158.9px;width:127px;height:17px"><div class="cbb"></div></div>
<span class="t" id="t108" style="top:163.37px;font-size:10.1px;color:#000;letter-spacing:-0.190px;left:446.20px;">QCC307x</span>
<span class="t" id="t109" style="top:187.67px;font-size:10.1px;color:#000;letter-spacing:-0.137px;left:342.20px;">ANC Sampling Rate</span>
<div class="cb" style="left:444.2px;top:185.9px;width:127px;height:17px"><div class="cbb"></div></div>
<div class="abs" style="left:446px;top:187.2px;width:107.8px;height:13.6px;background:#0078d7"></div>
<span class="t" id="t110" style="top:190.37px;font-size:10.1px;color:#fff;letter-spacing:-0.045px;left:446.20px;">32kHz</span>
<svg class="abs" style="left:532px;top:170px" width="50" height="12" viewBox="0 0 50 12"><path d="M7 7 C 14 7.6, 22 7.4, 28 6.4 S 38 5.0, 42.4 5.2" stroke="#ee1c25" stroke-width="3.4" stroke-linecap="round" fill="none"/></svg>
<svg class="abs" style="left:532px;top:197px" width="50" height="12" viewBox="0 0 50 12"><path d="M7 7 C 14 7.4, 24 6.6, 39.6 6.2" stroke="#ee1c25" stroke-width="3.4" stroke-linecap="round" fill="none"/></svg>
<span class="t" id="t111" style="top:224.17px;font-size:10.1px;color:#000;letter-spacing:-0.011px;left:342.90px;">IIR Proxy Filter Parameters to HTF</span>
<div class="chk" style="left:560px;top:221.6px;width:11.5px;height:11.5px;border-color:#6a6a6a #fff #fff #6a6a6a"></div>
<svg class="abs" style="left:560px;top:222px" width="11" height="11" viewBox="0 0 11 11"><path d="M2.6 4.6 L4.5 6.6 L8.3 2.8" stroke="#000" stroke-width="1.9" fill="none"/></svg>
<div class="btn" style="left:500px;top:595px;width:72px;height:21px;border-color:#6e6e6e;box-shadow:inset 1px 1px 0 #fff, inset -1px -1px 0 #7a7a7a, inset -2px -2px 0 #a8a8a8"></div>
<span class="t" id="t112" style="top:601.67px;font-size:10.1px;color:#000;letter-spacing:-0.297px;left:436.00px;width:200px;text-align:center;">OK</span>
<div class="btn" style="left:585.5px;top:596px;width:71px;height:20px"></div>
<span class="t" id="t113" style="top:601.67px;font-size:10.1px;color:#000;letter-spacing:-0.370px;left:520.50px;width:200px;text-align:center;">Cancel</span>
</body></html>
